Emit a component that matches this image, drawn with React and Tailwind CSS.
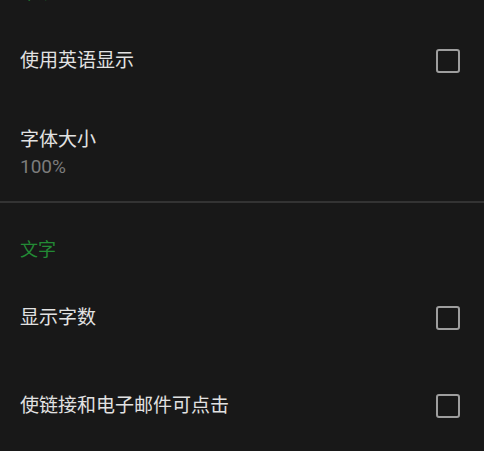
import React, { useState } from 'react';

const font = { fontFamily: '"Roboto", "Noto Sans CJK SC", sans-serif' };

// Section title in green
const SectionHeader = ({ title }) => (
  <div className="h-[71px] px-5 pt-[35px]">
    <div className="text-[18px] leading-[24px] text-[#238a35]">{title}</div>
  </div>
);

const Checkbox = ({ checked, onChange }) => (
  <button
    onClick={onChange}
    className="w-[24px] h-[24px] rounded-[3px] border-[2.5px] border-[#9e9e9e] flex items-center justify-center"
  >
    {checked && (
      <svg viewBox="0 0 24 24" className="w-4 h-4" fill="none" stroke="#9e9e9e" strokeWidth={3}>
        <path d="M5 12l5 5 9-10" />
      </svg>
    )}
  </button>
);

const CheckRow = ({ label, checked, onChange }) => (
  <div className="h-[88px] pl-5 pr-[24px] flex items-center justify-between">
    <span className="text-[19px] leading-[24px] text-[#e2e2e2]">{label}</span>
    <Checkbox checked={checked} onChange={onChange} />
  </div>
);

const App = () => {
  const [english, setEnglish] = useState(false);
  const [wordCount, setWordCount] = useState(false);
  const [links, setLinks] = useState(false);

  return (
    <div className="min-h-screen bg-[#181818] overflow-hidden" style={font}>
      <div className="-mt-[54px]">
        <SectionHeader title="常规" />
        <CheckRow label="使用英语显示" checked={english} onChange={() => setEnglish(!english)} />

        {/* Font size */}
        <div className="h-[96px] px-5 pt-[23px]">
          <div className="text-[19px] leading-[24px] text-[#e2e2e2]">字体大小</div>
          <div className="mt-[5px] text-[19px] leading-[20px] text-[#7c7c7c]">100%</div>
        </div>

        <div className="h-[2px] bg-[#333333]" />

        <SectionHeader title="文字" />
        <CheckRow label="显示字数" checked={wordCount} onChange={() => setWordCount(!wordCount)} />
        <CheckRow label="使链接和电子邮件可点击" checked={links} onChange={() => setLinks(!links)} />
      </div>
    </div>
  );
};

export default App;
